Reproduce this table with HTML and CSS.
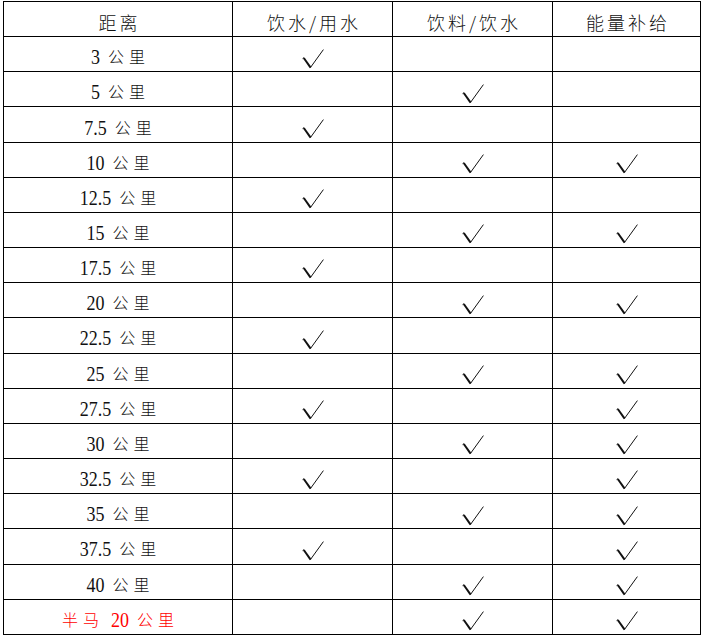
FILE: index.html
```html
<!DOCTYPE html>
<html lang="zh">
<head>
<meta charset="utf-8">
<link rel="stylesheet" href="styles.css">
</head>
<body>
<svg width="0" height="0" class="defs">
  <defs>
    <symbol id="ck" viewBox="0 0 22 20">
      <path d="M0.6 9.6 L2 8.6" stroke="#111" stroke-width="1" fill="none"/>
      <path d="M1.8 9 L8.6 18.6" stroke="#111" stroke-width="2" fill="none"/>
      <path d="M8.4 18.6 L21.4 0.6" stroke="#111" stroke-width="1" fill="none"/>
    </symbol>
  </defs>
</svg>
<table class="tbl">
  <colgroup>
    <col class="c1"><col class="c2"><col class="c3"><col class="c4">
  </colgroup>
  <thead>
    <tr class="head">
      <th>距离</th><th>饮水/用水</th><th>饮料/饮水</th><th>能量补给</th>
    </tr>
  </thead>
  <tbody id="rows">
    <tr><td><span class="n">3</span><span class="z">公里</span></td><td><svg class="ck"><use href="#ck"/></svg></td><td></td><td></td></tr>
    <tr><td><span class="n">5</span><span class="z">公里</span></td><td></td><td><svg class="ck"><use href="#ck"/></svg></td><td></td></tr>
    <tr><td><span class="n">7.5</span><span class="z">公里</span></td><td><svg class="ck"><use href="#ck"/></svg></td><td></td><td></td></tr>
    <tr><td><span class="n">10</span><span class="z">公里</span></td><td></td><td><svg class="ck"><use href="#ck"/></svg></td><td><svg class="ck"><use href="#ck"/></svg></td></tr>
    <tr><td><span class="n">12.5</span><span class="z">公里</span></td><td><svg class="ck"><use href="#ck"/></svg></td><td></td><td></td></tr>
    <tr><td><span class="n">15</span><span class="z">公里</span></td><td></td><td><svg class="ck"><use href="#ck"/></svg></td><td><svg class="ck"><use href="#ck"/></svg></td></tr>
    <tr><td><span class="n">17.5</span><span class="z">公里</span></td><td><svg class="ck"><use href="#ck"/></svg></td><td></td><td></td></tr>
    <tr><td><span class="n">20</span><span class="z">公里</span></td><td></td><td><svg class="ck"><use href="#ck"/></svg></td><td><svg class="ck"><use href="#ck"/></svg></td></tr>
    <tr><td><span class="n">22.5</span><span class="z">公里</span></td><td><svg class="ck"><use href="#ck"/></svg></td><td></td><td></td></tr>
    <tr><td><span class="n">25</span><span class="z">公里</span></td><td></td><td><svg class="ck"><use href="#ck"/></svg></td><td><svg class="ck"><use href="#ck"/></svg></td></tr>
    <tr><td><span class="n">27.5</span><span class="z">公里</span></td><td><svg class="ck"><use href="#ck"/></svg></td><td></td><td><svg class="ck"><use href="#ck"/></svg></td></tr>
    <tr><td><span class="n">30</span><span class="z">公里</span></td><td></td><td><svg class="ck"><use href="#ck"/></svg></td><td><svg class="ck"><use href="#ck"/></svg></td></tr>
    <tr><td><span class="n">32.5</span><span class="z">公里</span></td><td><svg class="ck"><use href="#ck"/></svg></td><td></td><td><svg class="ck"><use href="#ck"/></svg></td></tr>
    <tr><td><span class="n">35</span><span class="z">公里</span></td><td></td><td><svg class="ck"><use href="#ck"/></svg></td><td><svg class="ck"><use href="#ck"/></svg></td></tr>
    <tr><td><span class="n">37.5</span><span class="z">公里</span></td><td><svg class="ck"><use href="#ck"/></svg></td><td></td><td><svg class="ck"><use href="#ck"/></svg></td></tr>
    <tr><td><span class="n">40</span><span class="z">公里</span></td><td></td><td><svg class="ck"><use href="#ck"/></svg></td><td><svg class="ck"><use href="#ck"/></svg></td></tr>
    <tr class="red"><td><span class="z">半马</span><span class="n">20</span><span class="z">公里</span></td><td></td><td><svg class="ck"><use href="#ck"/></svg></td><td><svg class="ck"><use href="#ck"/></svg></td></tr>
  </tbody>
</table>
</body>
</html>
```

FILE: styles.css
```css
html, body {
  margin: 0;
  padding: 0;
  background: #ffffff;
}

.defs {
  position: absolute;
  width: 0;
  height: 0;
  overflow: hidden;
}

.tbl {
  margin: 1px 0 0 3px;
  border-collapse: collapse;
  table-layout: fixed;
  width: 697px;
  color: #111111;
  font-family: "Liberation Serif", "Noto Sans CJK SC", serif;
}

.c1 { width: 229px; }
.c2 { width: 160px; }
.c3 { width: 160px; }
.c4 { width: 148px; }

.tbl th,
.tbl td {
  border: 1px solid #000000;
  padding: 6px 0 0 0;
  text-align: center;
  vertical-align: middle;
  font-weight: normal;
  white-space: nowrap;
}

.tbl tr {
  height: 35.17px;
}

.head th {
  font-family: "Noto Sans CJK SC", sans-serif;
  font-weight: 300;
  font-size: 18px;
  letter-spacing: 3px;
  line-height: 22px;
  padding-left: 3px;
}

.tbl td {
  font-size: 15px;
  line-height: 22px;
}

.n {
  display: inline-block;
  font-family: "Liberation Serif", serif;
  font-size: 18px;
  transform: scaleY(1.2);
  margin-right: 8px;
}

.z + .n {
  margin-left: 12px;
}

.z {
  font-family: "Noto Sans CJK SC", sans-serif;
  font-weight: 300;
  font-size: 16px;
  letter-spacing: 5px;
  margin-right: -5px;
}

.red td:first-child {
  color: #ff0000;
}

.ck {
  display: inline-block;
  width: 22px;
  height: 20px;
  vertical-align: middle;
  margin-top: 0;
}
```
